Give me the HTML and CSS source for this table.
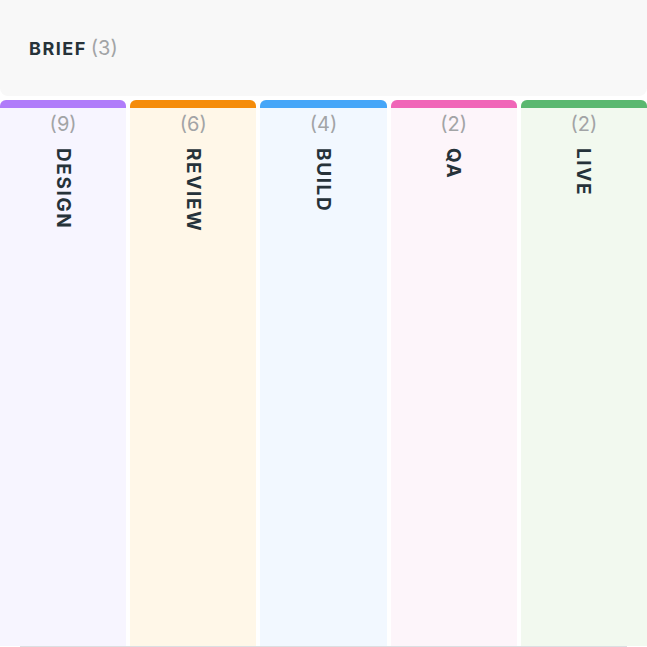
FILE: index.html
```html
<!DOCTYPE html>
<html>
<head>
<meta charset="utf-8">
<link rel="stylesheet" href="styles.css">
</head>
<body>
<div class="page">
  <div class="brief">
    <span class="brief-title">BRIEF</span>
    <span class="brief-count">(3)</span>
  </div>
  <div class="board">
    <div class="col col-design">
      <div class="bar"></div>
      <div class="count">(9)</div>
      <div class="label">DESIGN</div>
    </div>
    <div class="col col-review">
      <div class="bar"></div>
      <div class="count">(6)</div>
      <div class="label">REVIEW</div>
    </div>
    <div class="col col-build">
      <div class="bar"></div>
      <div class="count">(4)</div>
      <div class="label">BUILD</div>
    </div>
    <div class="col col-qa">
      <div class="bar"></div>
      <div class="count">(2)</div>
      <div class="label">QA</div>
    </div>
    <div class="col col-live">
      <div class="bar"></div>
      <div class="count">(2)</div>
      <div class="label">LIVE</div>
    </div>
  </div>
  <div class="rule"></div>
</div>
</body>
</html>
```

FILE: styles.css
```css
html, body {
  margin: 0;
  padding: 0;
  background: #ffffff;
  overflow: hidden;
}

body {
  font-family: Inter, "Noto Sans", sans-serif;
  color: #263239;
}

.page {
  display: flex;
  flex-direction: column;
  width: 647px;
  height: 647px;
}

.brief {
  height: 96px;
  flex: none;
  display: flex;
  align-items: center;
  padding-left: 29px;
  background: #f8f8f8;
  border-radius: 0 0 8px 8px;
  box-sizing: border-box;
}

.brief-title {
  font-size: 18px;
  font-weight: 700;
  letter-spacing: 1.5px;
  color: #263239;
}

.brief-count {
  margin-left: 4px;
  font-size: 20px;
  font-weight: 400;
  color: #a2a4a6;
}

.board {
  margin-top: 4px;
  display: flex;
  gap: 4px;
  height: 546px;
  flex: none;
}

.col {
  flex: 1 1 0;
  display: flex;
  flex-direction: column;
  align-items: center;
  border-radius: 6px 6px 0 0;
  overflow: hidden;
}

.bar {
  align-self: stretch;
  height: 8px;
  flex: none;
}

.count {
  margin-top: 4px;
  font-size: 20px;
  line-height: 24px;
  color: #a2a4a6;
}

.label {
  margin-top: 12px;
  writing-mode: vertical-rl;
  font-size: 19px;
  font-weight: 700;
  letter-spacing: 1.6px;
  color: #263239;
}

.col-design { background: #f7f5ff; }
.col-design .bar { background: #b07cfa; }
.col-review { background: #fff7e8; }
.col-review .bar { background: #f58c0a; }
.col-build { background: #f2f8ff; }
.col-build .bar { background: #46a6f8; }
.col-qa { background: #fdf5fa; }
.col-qa .bar { background: #f066b8; }
.col-live { background: #f2f9ef; }
.col-live .bar { background: #5bb870; }

.rule {
  height: 1px;
  margin: 0 20px;
  background: #dcdfe2;
  flex: none;
}
```
